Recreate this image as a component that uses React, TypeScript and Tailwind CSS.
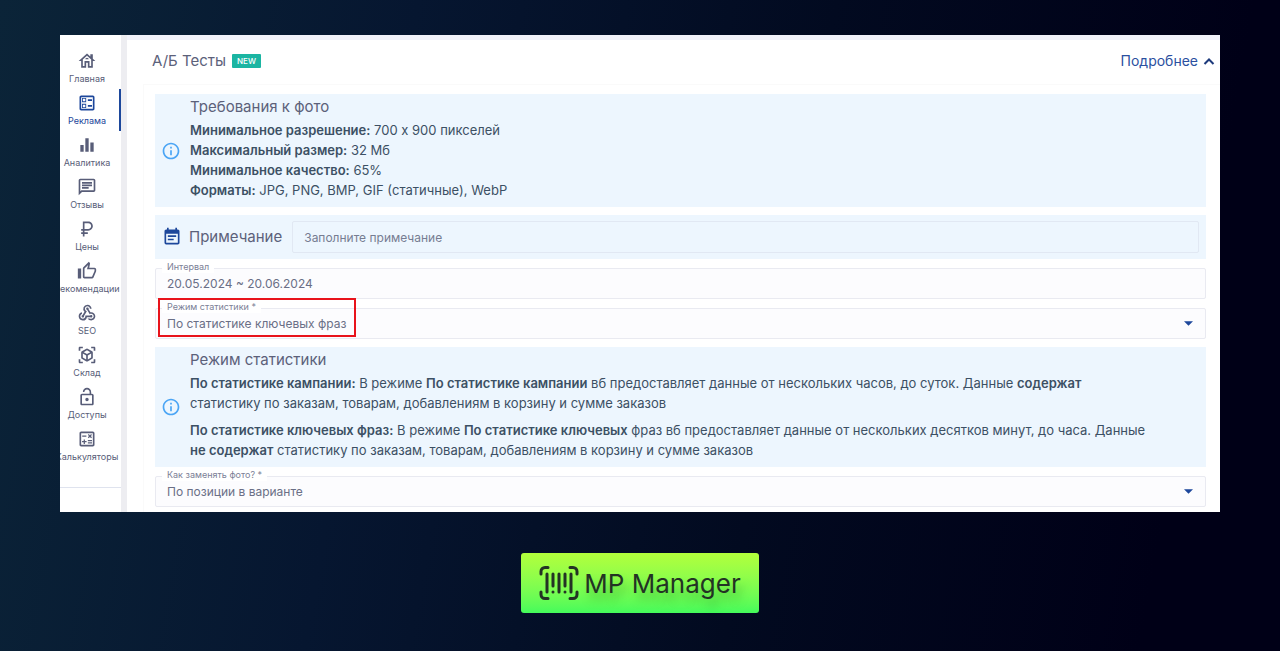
import type { ReactNode } from "react";
import type { IconType } from "react-icons";
import {
  MdCurrencyRuble,
  MdEqualizer,
  MdEventNote,
  MdInfoOutline,
  MdLockOpen,
  MdOutlineBallot,
  MdOutlineCalculate,
  MdOutlineChat,
  MdOutlineHouse,
  MdOutlineThumbUp,
  MdViewInAr,
  MdWebhook,
} from "react-icons/md";

type NavItemType = { label: string; icon: IconType; active?: boolean };

const navItems: NavItemType[] = [
  { label: "Главная", icon: MdOutlineHouse },
  { label: "Реклама", icon: MdOutlineBallot, active: true },
  { label: "Аналитика", icon: MdEqualizer },
  { label: "Отзывы", icon: MdOutlineChat },
  { label: "Цены", icon: MdCurrencyRuble },
  { label: "Рекомендации", icon: MdOutlineThumbUp },
  { label: "SEO", icon: MdWebhook },
  { label: "Склад", icon: MdViewInAr },
  { label: "Доступы", icon: MdLockOpen },
  { label: "Калькуляторы", icon: MdOutlineCalculate },
];

const Sidebar = () => (
  <nav className="w-[61px] shrink-0 overflow-hidden bg-white pt-3">
    <ul>
      {navItems.map(({ label, icon: Icon, active }) => (
        <li key={label}>
          <a
            href="#"
            className={`flex h-[42px] flex-col items-center gap-[2px] border-r-2 pt-1 pr-[5px] ${active ? "border-[#1d479b] text-[#1d479b]" : "border-transparent text-[#585d78]"}`}
          >
            <Icon className="size-5 shrink-0" />
            <span className="text-[9px] leading-3 whitespace-nowrap">
              {label}
            </span>
          </a>
        </li>
      ))}
    </ul>
    <hr className="mt-5 border-[#dfe3ee]" />
  </nav>
);

const InfoBox = ({
  title,
  children,
}: {
  title: string;
  children: ReactNode;
}) => (
  <section className="flex items-center gap-[9px] bg-[#edf6fe] pr-1 pl-[6px] text-[#3c5064]">
    <MdInfoOutline className="size-5 shrink-0 text-[#4ba5f5]" />
    <div className="pt-[1px] pb-[7px] text-[13px] leading-5">
      <h2 className="mb-[1px] text-[15px] leading-6 text-[#5c617a]">{title}</h2>
      {children}
    </div>
  </section>
);

const fieldLabel =
  "absolute -top-[7px] left-[7px] bg-white px-[5px] text-[9px] leading-3 text-[#7b8096]";

const SelectField = ({
  id,
  label,
  value,
  highlighted,
}: {
  id: string;
  label: string;
  value: string;
  highlighted?: boolean;
}) => (
  <div className="relative">
    <select
      id={id}
      className="block h-[31px] w-full appearance-none rounded-[2px] border border-[#e9eaf1] bg-[#fcfcfe] px-[11px] text-[12px] text-[#6a6f86]"
    >
      <option>{value}</option>
    </select>
    <label htmlFor={id} className={fieldLabel}>
      {label}
    </label>
    <svg
      viewBox="0 0 8 4"
      className="pointer-events-none absolute top-[13px] right-[13px] h-[5px] w-[9px] fill-[#1d479b]"
    >
      <path d="M0 0h8L4 4z" />
    </svg>
    {highlighted && (
      <div className="pointer-events-none absolute -top-[10px] left-[3px] h-[39px] w-[198px] border-2 border-[#e8131b]" />
    )}
  </div>
);

const Logo = () => (
  <svg
    viewBox="0 0 40 34"
    className="h-[34px] w-10"
    fill="none"
    stroke="currentColor"
    strokeWidth="3"
    strokeLinecap="round"
  >
    <path d="M2 8V5.500a4 4 0 0 1 4-4h3M31 1.500h3a4 4 0 0 1 4 4V8M38 26v2.500a4 4 0 0 1-4 4h-3M9 32.500H6a4 4 0 0 1-4-4V26" />
    <path d="M8 8v18M14 8v12M20 8v18M26 8v12M32 8v18M14 26v.100M26 26v.100" />
  </svg>
);

const App = () => (
  <main className="min-h-screen bg-[linear-gradient(100deg,#0b2438_0%,#061630_30%,#020a20_60%,#000017_90%)] px-[60px] pt-[35px] pb-[38px] font-[Inter,sans-serif]">
    <div className="flex overflow-hidden bg-white">
      <Sidebar />
      <div className="w-[6px] shrink-0 bg-[#ededf1]" />
      <div className="min-w-0 flex-1">
        <div className="h-[5px] bg-[#f1f2fa]" />
        <header className="flex h-11 items-center justify-between pr-[5px] pb-[3px] pl-[25px]">
          <div className="flex items-center gap-[6px]">
            <h1 className="text-[15px] leading-6 text-[#5c617a]">А/Б Тесты</h1>
            <span className="rounded-[1px] bg-[#1bb5a2] px-[5px] text-[8px] leading-[14px] font-medium text-white">
              NEW
            </span>
          </div>
          <button
            type="button"
            className="flex items-center gap-[5px] text-[14px] leading-6 text-[#2b50a0]"
          >
            Подробнее
            <svg
              viewBox="0 0 12 8"
              className="h-2 w-3 fill-none stroke-[#1d3a7c] stroke-2"
            >
              <path d="M1.500 7L6 2.500 10.500 7" />
            </svg>
          </button>
        </header>
        <div className="ml-4 border-t border-l border-[#fafafa] pt-[9px] pr-[14px] pb-[5px] pl-[11px]">
          <InfoBox title="Требования к фото">
            <p>
              <b className="font-semibold">Минимальное разрешение:</b> 700 x 900
              пикселей
            </p>
            <p>
              <b className="font-semibold">Максимальный размер:</b> 32 Мб
            </p>
            <p>
              <b className="font-semibold">Минимальное качество:</b> 65%
            </p>
            <p>
              <b className="font-semibold">Форматы:</b> JPG, PNG, BMP, GIF
              (статичные), WebP
            </p>
          </InfoBox>
          <div className="mt-2 flex h-11 items-center bg-[#edf6fe] pr-[7px] pl-[7px]">
            <MdEventNote className="size-5 shrink-0 text-[#1d479b]" />
            <label
              htmlFor="note"
              className="mr-[10px] ml-[7px] text-[15px] leading-6 text-[#5c617a]"
            >
              Примечание
            </label>
            <input
              id="note"
              placeholder="Заполните примечание"
              className="h-8 min-w-0 flex-1 rounded-[2px] border border-[#e1e8f3] bg-transparent px-[11px] text-[12px] placeholder:text-[#767d92]"
            />
          </div>
          <div className="relative mt-[9px]">
            <input
              id="interval"
              defaultValue="20.05.2024 ~ 20.06.2024"
              className="block h-[31px] w-full rounded-[2px] border border-[#e9eaf1] bg-[#fcfcfe] px-[11px] text-[12px] text-[#6a6f86]"
            />
            <label htmlFor="interval" className={fieldLabel}>
              Интервал
            </label>
          </div>
          <div className="mt-[9px] mb-2">
            <SelectField
              id="mode"
              label="Режим статистики *"
              value="По статистике ключевых фраз"
              highlighted
            />
          </div>
          <InfoBox title="Режим статистики">
            <p>
              <b className="font-semibold">По статистике кампании:</b> В режиме{" "}
              <b className="font-semibold">По статистике кампании</b> вб
              предоставляет данные от нескольких часов, до суток. Данные{" "}
              <b className="font-semibold">содержат</b>
              <br />
              статистику по заказам, товарам, добавлениям в корзину и сумме
              заказов
            </p>
            <p className="mt-[7px]">
              <b className="font-semibold">По статистике ключевых фраз:</b> В
              режиме <b className="font-semibold">По статистике ключевых</b>{" "}
              фраз вб предоставляет данные от нескольких десятков минут, до
              часа. Данные
              <br />
              <b className="font-semibold">не содержат</b> статистику по
              заказам, товарам, добавлениям в корзину и сумме заказов
            </p>
          </InfoBox>
          <div className="mt-[9px]">
            <SelectField
              id="replace"
              label="Как заменять фото? *"
              value="По позиции в варианте"
            />
          </div>
        </div>
      </div>
    </div>
    <a
      href="#"
      className="mx-auto mt-[41px] flex h-[60px] w-fit items-center gap-[5px] rounded-[3px] bg-linear-to-b from-[#b2ff3b] to-[#43fb5b] px-[18px] text-[26px] text-[#233324]"
    >
      <Logo />
      <span className="text-shadow-[4px_8px_8px_rgb(20_120_30/0.35)]">
        MP Manager
      </span>
    </a>
  </main>
);

export default App;
